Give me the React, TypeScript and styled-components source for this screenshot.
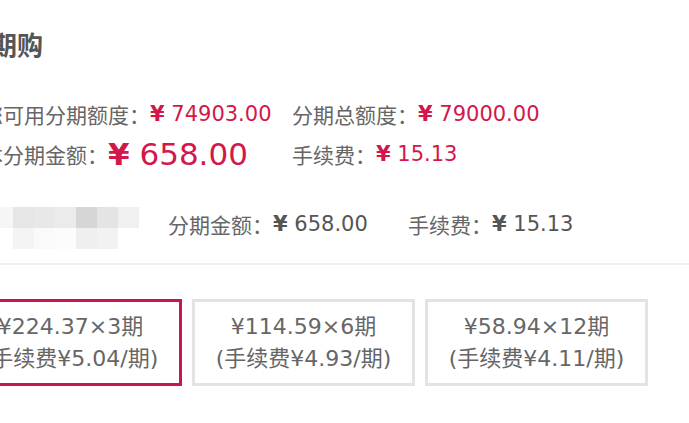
import React from 'react'
import styled, { createGlobalStyle } from 'styled-components'

const GlobalStyle = createGlobalStyle`
  html, body {
    margin: 0;
    padding: 0;
    background: #fff;
    overflow: hidden;
  }
  body {
    font-family: 'DejaVu Sans', 'Noto Sans CJK SC', sans-serif;
  }
`

const RED = '#d3174a'

const Panel = styled.div`
  margin-left: -41px;
  width: 730px;
  color: #666;
  font-family: 'DejaVu Sans', 'Noto Sans CJK SC', sans-serif;
`

const Title = styled.h2`
  margin: 29px 0 0 6px;
  font-family: 'Noto Sans CJK SC', sans-serif;
  font-size: 26px;
  line-height: 30px;
  font-weight: 700;
  color: #555;
`

const QuotaGrid = styled.div`
  display: grid;
  grid-template-columns: 310px auto;
  margin: 35px 0 0 23px;
`

const Cell = styled.div`
  display: flex;
  align-items: center;
  height: 40px;
  white-space: nowrap;
`

const Label = styled.span`
  font-family: 'Noto Sans CJK SC', sans-serif;
  font-size: 21px;
  color: #666;
`

const Amount = styled.span<{ $big?: boolean; $muted?: boolean }>`
  font-family: 'DejaVu Sans', sans-serif;
  font-size: ${({ $big }) => ($big ? 31 : 21)}px;
  color: ${({ $muted }) => ($muted ? '#555' : RED)};
  white-space: pre;

  b {
    font-weight: 700;
  }
`

const ItemRow = styled.div`
  display: flex;
  align-items: flex-start;
  margin: 33px 0 0 33px;
  height: 42px;
`

const Mosaic = styled.div`
  display: grid;
  grid-template-columns: repeat(7, 21px);
  grid-auto-rows: 21px;
  margin-right: 29px;
  filter: blur(0.6px);
`

const Tile = styled.div<{ $tone: string }>`
  background: ${({ $tone }) => $tone};
`

const ItemStat = styled.div<{ $width?: number }>`
  display: flex;
  align-items: center;
  height: 34px;
  white-space: nowrap;
  ${({ $width }) => $width && `width: ${$width}px;`}
`

const Divider = styled.div`
  height: 2px;
  margin-top: 14px;
  background: #eee;
`

const OptionList = styled.div`
  display: flex;
  gap: 10px;
  margin-top: 34px;
`

const OptionBox = styled.div<{ $active?: boolean }>`
  box-sizing: border-box;
  width: 223px;
  height: 87px;
  border: 3px solid ${({ $active }) => ($active ? '#c8174a' : '#e3e3e3')};
  display: flex;
  flex-direction: column;
  align-items: center;
  justify-content: center;
  font-size: 22px;
  line-height: 32px;
  color: #666;
  white-space: nowrap;
  cursor: pointer;
`

const tiles = [
  '#f6f6f6', '#e6e6e6', '#e8e8e8', '#ebebeb', '#d6d6d6', '#e4e4e4', '#f0f0f0',
  '#fff', '#f4f4f4', '#fafafa', '#fcfcfc', '#efefef', '#f2f2f2', '#fff',
]

const plans = [
  { per: '224.37', n: 3, fee: '5.04', active: true },
  { per: '114.59', n: 6, fee: '4.93' },
  { per: '58.94', n: 12, fee: '4.11' },
]

export default function App() {
  return (
    <>
      <GlobalStyle />
      <Panel>
        <Title>分期购</Title>

        <QuotaGrid>
          <Cell>
            <Label>您可用分期额度：</Label>
            <Amount><b>¥</b> 74903.00</Amount>
          </Cell>
          <Cell>
            <Label>分期总额度：</Label>
            <Amount><b>¥</b> 79000.00</Amount>
          </Cell>
          <Cell>
            <Label>本分期金额：</Label>
            <Amount $big><b>¥</b> 658.00</Amount>
          </Cell>
          <Cell>
            <Label>手续费：</Label>
            <Amount><b>¥</b> 15.13</Amount>
          </Cell>
        </QuotaGrid>

        <ItemRow>
          <Mosaic>
            {tiles.map((t, i) => (
              <Tile key={i} $tone={t} />
            ))}
          </Mosaic>
          <ItemStat $width={240}>
            <Label>分期金额：</Label>
            <Amount $muted><b>¥</b> 658.00</Amount>
          </ItemStat>
          <ItemStat>
            <Label>手续费：</Label>
            <Amount $muted><b>¥</b> 15.13</Amount>
          </ItemStat>
        </ItemRow>

        <Divider />

        <OptionList>
          {plans.map(p => (
            <OptionBox key={p.n} $active={p.active}>
              <span>¥{p.per}×{p.n}期</span>
              <span>(手续费¥{p.fee}/期)</span>
            </OptionBox>
          ))}
        </OptionList>
      </Panel>
    </>
  )
}
